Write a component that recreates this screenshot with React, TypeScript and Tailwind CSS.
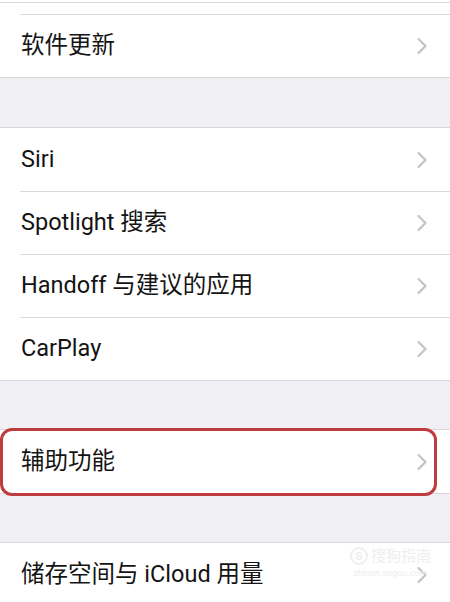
const Chevron = () => (
  <svg width="12" height="18" viewBox="0 0 12 18" fill="none">
    <path d="M2.5 2l7 7-7 7" stroke="#c4c4c9" strokeWidth="2.3" strokeLinecap="round" strokeLinejoin="round" />
  </svg>
);

function Row({ label, first = false }: { label: string; first?: boolean }) {
  return (
    <div className="flex h-[63px] bg-white pl-5">
      <div className={`flex flex-1 items-center pr-[22px] ${first ? "" : "border-t border-[#dadade]"}`}>
        <span className="flex-1 pl-px">{label}</span>
        <Chevron />
      </div>
    </div>
  );
}

function Group({ children }: { children: React.ReactNode }) {
  return <div className="border-y border-[#d8d8dc] bg-white">{children}</div>;
}

export default function App() {
  return (
    <div
      className="h-[602px] w-[450px] overflow-hidden bg-[#efeff4] text-[23.5px] text-[#141414]"
      style={{ fontFamily: 'Roboto, "Noto Sans CJK SC", sans-serif' }}
    >
      {/* tail of the group above */}
      <div className="bg-white">
        <div className="h-[2px]" />
        <div className="h-px bg-[#dadade]" />
        <div className="h-[11px]" />
        <div className="border-b border-[#d8d8dc]">
          <Row label="软件更新" />
        </div>
      </div>

      <div className="h-[49px]" />

      <Group>
        <Row label="Siri" first />
        <Row label="Spotlight 搜索" />
        <Row label="Handoff 与建议的应用" />
        <Row label="CarPlay" />
      </Group>

      <div className="h-[48px]" />

      <div className="relative">
        <Group>
          <Row label="辅助功能" first />
        </Group>
        <div className="pointer-events-none absolute -top-px left-0 h-[68px] w-[437px] rounded-[12px] border-[3px] border-[#bf3c3e]" />
      </div>

      <div className="h-[48px]" />

      <div className="relative">
        <Group>
          <Row label="储存空间与 iCloud 用量" first />
        </Group>
        {/* faint watermark */}
        <div className="pointer-events-none absolute left-[350px] top-[5px] flex flex-col items-center text-[#eeeef1]">
          <div className="flex items-center gap-[3px]">
            <span className="flex h-[18px] w-[18px] items-center justify-center rounded-full border-2 border-[#eeeef1] text-[11px] font-bold leading-none">
              S
            </span>
            <span className="text-[15px] leading-none">搜狗指南</span>
          </div>
          <span className="mt-[4px] text-[9px] leading-none">zhinan.sogou.com</span>
        </div>
      </div>
    </div>
  );
}
